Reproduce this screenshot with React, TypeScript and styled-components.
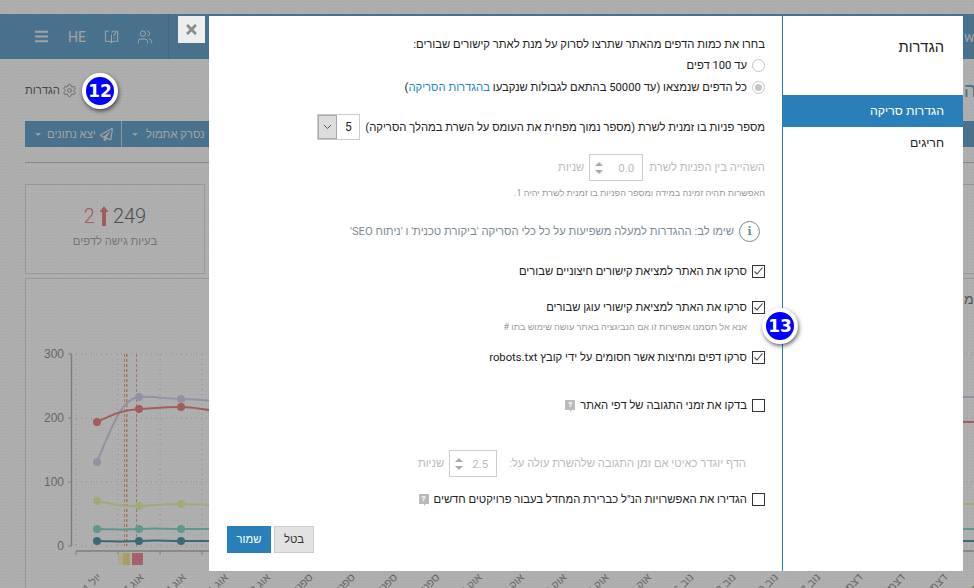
import React from 'react';
import styled, { createGlobalStyle } from 'styled-components';
import { Settings, Users } from 'lucide-react';
import { FaBars, FaRegPaperPlane, FaTimes } from 'react-icons/fa';

const GlobalStyle = createGlobalStyle`
  html, body {
    margin: 0;
    padding: 0;
    overflow: hidden;
  }
  body {
    font-family: Roboto, "Liberation Sans", Arial, sans-serif;
  }
`;

const Page = styled.div`
  position: relative;
  width: 974px;
  height: 588px;
  overflow: hidden;
  padding-top: 14px;
  box-sizing: border-box;
  background-color: #fdfdfd;
  color: #333;
`;

const Overlay = styled.div`
  position: absolute;
  inset: 0;
  background-color: rgba(102, 102, 102, 0.52);
  background-image: radial-gradient(rgba(0, 0, 0, 0.04) 1px, transparent 1px);
  background-size: 3px 3px;
`;

/* page behind the dialog */
const Header = styled.header`
  display: flex;
  align-items: center;
  height: 45px;
  padding-left: 34px;
  background: #2980b9;
  color: #e6e6e6;
  white-space: nowrap;
`;

const HeaderIcons = styled.div`
  display: flex;
  align-items: center;
  width: 134px;
  height: 100%;
  border-right: 1px solid #1f6a9c;
  flex-shrink: 0;
`;

const HeaderLang = styled.span`
  width: 18px;
  margin: 0 18px 0 19px;
  font-size: 14px;
`;

const UsersWrap = styled.span`
  display: flex;
  margin-left: 18px;
`;

const HeaderHost = styled.span`
  margin-left: 795px;
  font-size: 14px;
`;

const BookIcon = () => (
  <svg width="15" height="15" viewBox="0 0 16 16" fill="none" stroke="currentColor" strokeWidth="1.1">
    <path d="M5 2.5H1.5v10.5H6l2 1.5 2-1.5h4.5V2.5H13" />
    <path d="M8 14.5V6" />
    <path d="M8.5 4c0-2.4 4-2.4 4 0 0 1.6-2 1.6-2 3.2M10.5 9v1" />
  </svg>
);

const TitleRow = styled.div`
  display: flex;
  align-items: center;
  height: 62px;
  padding-left: 25px;
  font-size: 11.25px;
  color: #222;
  white-space: nowrap;
`;

const GearWrap = styled.span`
  display: flex;
  flex-shrink: 0;
  margin-left: 2px;
  color: #666;
`;

const PageHeading = styled.span`
  margin-left: 887px;
  font-size: 20px;
  font-weight: 500;
  color: #2980b9;
`;

const Toolbar = styled.div`
  display: flex;
  height: 26px;
  margin-left: 25px;
  background: #2980b9;
  color: #e4e4e4;
  font-size: 11.25px;
  white-space: nowrap;
`;

const ToolbarButton = styled.div<{ $width: number; $gap: number }>`
  display: flex;
  align-items: center;
  gap: ${(p) => p.$gap}px;
  flex-shrink: 0;
  width: ${(p) => p.$width}px;
  padding-left: 10px;
  box-sizing: border-box;
  border-right: 1px solid #d0d0d0;
`;

const PlaneWrap = styled.span`
  display: flex;
  margin-left: -2px;
`;

const Caret = styled.span`
  width: 0;
  height: 0;
  border-left: 3px solid transparent;
  border-right: 3px solid transparent;
  border-top: 3px solid #d8d8d8;
`;

const Divider = styled.hr`
  height: 1px;
  margin: 15px 0 21px 25px;
  border: 0;
  background: #aaa;
`;

const StatsRow = styled.div`
  display: flex;
  gap: 4px;
  margin-left: 25px;
`;

const StatCard = styled.div<{ $width: number }>`
  display: flex;
  flex-direction: column;
  align-items: center;
  flex-shrink: 0;
  width: ${(p) => p.$width}px;
  height: 90px;
  box-sizing: border-box;
  padding-top: 17px;
  border: 1px solid #ccc;
  background: #fff;
`;

const StatValue = styled.div`
  display: flex;
  align-items: center;
  gap: 4px;
  height: 27px;
  font-size: 20px;
  font-weight: 300;
  color: #333;
  direction: ltr;
`;

const StatDelta = styled.span`
  color: #e85050;
`;

const StatLabel = styled.div`
  margin-top: 6px;
  font-size: 11.25px;
  color: #888;
`;

const ChartCard = styled.div`
  height: 320px;
  margin: 4px 0 0 25px;
  border: 1px solid #ccc;
  border-right: 0;
  border-bottom: 0;
  background: #fff;
`;

const POINT_X = [97, 139, 181, 223];
const GRID_Y = [354, 418, 482, 546];
const MONTHS = [
  'יול 31', 'אוג 7', 'אוג 14', 'אוג 21', 'אוג 28', 'ספט 4', 'ספט 11', 'ספט 18', 'ספט 25',
  'אוק 2', 'אוק 9', 'אוק 16', 'אוק 23', 'אוק 30', 'נוב 6', 'נוב 13', 'נוב 20', 'נוב 27',
  'דצמ 4', 'דצמ 11', 'דצמ 18', 'דצמ 25', 'ינו 1',
];

const SERIES = [
  { color: '#c8c0ea', points: [462, 397, 399, 401], end: 397 },
  { color: '#e85555', points: [422, 409, 407, 411], end: 422 },
  { color: '#e2f78c', points: [501, 506, 504, 505], end: 504 },
  { color: '#55d2ba', points: [529, 529, 529, 529], end: 529 },
  { color: '#08708a', points: [541, 541, 541, 541], end: 541 },
];

// svg is offset by the card position so numbers below are page coordinates
const Chart = () => (
  <svg width="949" height="310" viewBox="26 279 949 310" style={{ display: 'block' }}>
    {GRID_Y.map((y) => (
      <line key={y} x1="76" x2="974" y1={y} y2={y} stroke="#bbb" strokeDasharray="1 4" />
    ))}
    {POINT_X.map((x) => (
      <line key={x} x1={x - 21} x2={x - 21} y1="354" y2="546" stroke="#bbb" strokeDasharray="1 4" />
    ))}
    <path d="M71.5 354V546" stroke="#999" strokeWidth="1.5" />
    {GRID_Y.map((y) => (
      <line key={y} x1="68" x2="72" y1={y} y2={y} stroke="#999" />
    ))}
    <path d="M76 551H974" stroke="#999" strokeWidth="1.5" />
    {[76, 118, 160, 202].map((x) => (
      <line key={x} x1={x} x2={x} y1="551" y2="555" stroke="#999" />
    ))}
    {['300', '200', '100', '0'].map((label, i) => (
      <text key={label} x="64" y={GRID_Y[i] + 4} textAnchor="end" fontSize="12" fontFamily="Liberation Sans" fill="#666">
        {label}
      </text>
    ))}
    <rect x="118" y="553" width="5" height="12" fill="#fff3c0" />
    <rect x="123" y="553" width="7" height="12" fill="#f2dc6b" />
    <rect x="132" y="553" width="11" height="12" fill="#ea5f72" />
    <path d="M124.5 354V546M126.5 354V546M136.5 354V546" stroke="#e85555" strokeDasharray="3 2" strokeOpacity="0.75" />
    <path d="M127.5 354V546" stroke="#f2dc6b" strokeDasharray="3 2" />
    {SERIES.map((s) => {
      const [a, b, c, d] = s.points;
      const curve = `M97 ${a}C112 ${a - (a - b) * 0.55} 122 ${b + 1} 139 ${b}S165 ${c} 181 ${c}S207 ${d} 223 ${d}L974 ${s.end}`;
      return (
        <g key={s.color}>
          <path d={curve} fill="none" stroke={s.color} strokeWidth="2" />
          {s.points.map((y, i) => (
            <circle key={i} cx={POINT_X[i]} cy={y} r="4" fill={s.color} />
          ))}
        </g>
      );
    })}
    {MONTHS.map((label, i) => (
      <text
        key={i}
        transform={`translate(${102 + i * 42.3} 578) rotate(-45)`}
        direction="rtl"
        textAnchor="start"
        fontSize="11"
        fontFamily="Liberation Sans"
        fill="#666"
      >
        {label}
      </text>
    ))}
    <text x="964" y="304" fontSize="14" fontFamily="Liberation Sans" fill="#444">גמ</text>
  </svg>
);

const StatArrow = () => (
  <svg width="10" height="20" viewBox="0 0 10 20">
    <path d="M5 0l4.5 6H7v14H3V6H.5z" fill="#e85050" />
  </svg>
);

/* dialog */
const Modal = styled.div`
  position: absolute;
  left: 209px;
  top: 16px;
  display: flex;
  width: 754px;
  height: 555px;
  background: #fff;
  direction: rtl;
`;

const CloseButton = styled.div`
  position: absolute;
  left: 178px;
  top: 16px;
  display: flex;
  align-items: center;
  justify-content: center;
  width: 27px;
  height: 27px;
  background: #eee;
  color: #8c8c8c;
  font-size: 15px;
`;

const SideBar = styled.aside`
  flex-shrink: 0;
  width: 180px;
  border-left: 1px solid #2980b9;
`;

const SideTitle = styled.h2`
  height: 79px;
  margin: 0;
  padding: 22px 19px 0 0;
  box-sizing: border-box;
  font-size: 14.7px;
  line-height: 19px;
  font-weight: 400;
  color: #222;
`;

const SideItem = styled.div<{ $active?: boolean }>`
  height: 32px;
  padding-right: 19px;
  font-size: 12.3px;
  line-height: 32px;
  color: ${(p) => (p.$active ? '#fff' : '#222')};
  background: ${(p) => (p.$active ? '#2980b9' : 'transparent')};
`;

const Body = styled.div`
  flex: 1;
  padding: 18px 17px 0 0;
`;

const Field = styled.div<{ $mt: number; $h?: number; $indent?: number; $muted?: boolean }>`
  display: flex;
  align-items: center;
  gap: 5px;
  height: ${(p) => p.$h ?? 20}px;
  margin-top: ${(p) => p.$mt}px;
  margin-right: ${(p) => p.$indent ?? 0}px;
  font-size: 11.25px;
  white-space: nowrap;
  color: ${(p) => (p.$muted ? '#bbb' : '#222')};
`;

const Hint = styled(Field)`
  font-size: 9.15px;
  color: #999;
`;

const Link = styled.span`
  color: #1b87c9;
`;

const Radio = styled.span<{ $checked?: boolean }>`
  display: flex;
  align-items: center;
  justify-content: center;
  width: 13px;
  height: 13px;
  box-sizing: border-box;
  border: 1px solid #c4c4c4;
  border-radius: 50%;
  &::after {
    content: '';
    width: 7px;
    height: 7px;
    border-radius: 50%;
    background: ${(p) => (p.$checked ? '#c4c4c4' : 'transparent')};
  }
`;

const CheckBox = styled.span`
  display: flex;
  flex-shrink: 0;
  width: 11px;
  height: 11px;
  border: 1px solid #333;
  color: #444;
`;

const Check = ({ on }: { on?: boolean }) => (
  <CheckBox>
    {on && (
      <svg width="11" height="11" viewBox="0 0 11 11" fill="none" stroke="currentColor" strokeWidth="1.1">
        <path d="M1.5 5.5l2.5 2.5 5.5-6.5" />
      </svg>
    )}
  </CheckBox>
);

const SelectBox = styled.div`
  display: flex;
  width: 43px;
  height: 26px;
  box-sizing: border-box;
  border: 1px solid #ccc;
`;

const SelectValue = styled.span`
  flex: 1;
  text-align: center;
  line-height: 24px;
  font-size: 12px;
`;

const SelectArrow = styled.span`
  display: flex;
  align-items: center;
  justify-content: center;
  width: 17px;
  background: #ddd;
  border: 1px solid #aaa;
`;

const NumberBox = styled.div<{ $width: number; $offset?: number }>`
  display: flex;
  align-items: center;
  justify-content: space-between;
  width: ${(p) => p.$width}px;
  height: 27px;
  margin-right: ${(p) => p.$offset ?? 0}px;
  box-sizing: border-box;
  padding: 0 8px 0 5px;
  border: 1px solid #ccc;
  font-size: 11.5px;
  color: #bbb;
`;

const Spinner = styled.span`
  display: flex;
  flex-direction: column;
  gap: 4px;
  &::before,
  &::after {
    content: '';
    width: 0;
    height: 0;
    border-left: 4px solid transparent;
    border-right: 4px solid transparent;
  }
  &::before {
    border-bottom: 4px solid #aaa;
  }
  &::after {
    border-top: 4px solid #aaa;
  }
`;

const InfoCircle = styled.span`
  display: flex;
  align-items: center;
  justify-content: center;
  width: 19px;
  height: 19px;
  margin-right: 5px;
  border: 1px solid #6f8a99;
  border-radius: 50%;
  font-family: "DejaVu Serif", serif;
  font-size: 11px;
  font-weight: 700;
  color: #6f8a99;
`;

const InfoText = styled.span`
  color: #7d8a92;
`;

const HelpMark = styled.span`
  position: relative;
  display: inline-block;
  width: 10px;
  height: 10px;
  background: #bbb;
  color: #fff;
  font-size: 8px;
  font-weight: 700;
  line-height: 10px;
  text-align: center;
  &::after {
    content: '';
    position: absolute;
    left: 5px;
    bottom: -2px;
    border-top: 2px solid #bbb;
    border-right: 2px solid transparent;
  }
`;

const Footer = styled.div`
  display: flex;
  gap: 3px;
  height: 27px;
  margin-top: 17px;
  padding-left: 18px;
  direction: ltr;
`;

const Button = styled.button<{ $primary?: boolean }>`
  height: 27px;
  width: ${(p) => (p.$primary ? 44 : 40)}px;
  padding: 0;
  border: 1px solid ${(p) => (p.$primary ? '#2980b9' : '#ccc')};
  background: ${(p) => (p.$primary ? '#2980b9' : '#e2e2e2')};
  color: ${(p) => (p.$primary ? '#fff' : '#333')};
  font-family: inherit;
  font-size: 11.25px;
`;

const Badge = styled.div<{ $x: number; $y: number }>`
  position: absolute;
  left: ${(p) => p.$x - 18}px;
  top: ${(p) => p.$y - 18}px;
  display: flex;
  align-items: center;
  justify-content: center;
  width: 36px;
  height: 36px;
  box-sizing: border-box;
  border: 4px solid #fff;
  border-radius: 50%;
  background: #0000ff;
  box-shadow: 1px 2px 4px rgba(0, 0, 0, 0.6);
  color: #fff;
  font-family: "DejaVu Sans", sans-serif;
  font-size: 17px;
  font-weight: 700;
`;

function App(): JSX.Element {
  return (
    <Page>
      <GlobalStyle />
      <Header>
        <HeaderIcons>
          <FaBars size={15} />
          <HeaderLang>HE</HeaderLang>
          <BookIcon />
          <UsersWrap>
            <Users size={16} strokeWidth={1.5} />
          </UsersWrap>
        </HeaderIcons>
        <HeaderHost>www.</HeaderHost>
      </Header>
      <TitleRow>
        הגדרות
        <GearWrap>
          <Settings size={15} strokeWidth={1.5} />
        </GearWrap>
        <PageHeading>ה</PageHeading>
      </TitleRow>
      <Toolbar>
        <ToolbarButton $width={97} $gap={6}>
          <Caret />
          <span>יצא נתונים</span>
          <PlaneWrap>
            <FaRegPaperPlane size={13} />
          </PlaneWrap>
        </ToolbarButton>
        <ToolbarButton $width={90} $gap={8}>
          <Caret />
          <span>נסרק אתמול</span>
        </ToolbarButton>
      </Toolbar>
      <Divider />
      <StatsRow>
        <StatCard $width={180}>
          <StatValue>
            <StatDelta>2</StatDelta>
            <StatArrow />
            <span>249</span>
          </StatValue>
          <StatLabel>בעיות גישה לדפים</StatLabel>
        </StatCard>
        <StatCard $width={800} />
      </StatsRow>
      <ChartCard>
        <Chart />
      </ChartCard>

      <Overlay />
      <CloseButton>
        <FaTimes />
      </CloseButton>
      <Modal>
        <SideBar>
          <SideTitle>הגדרות</SideTitle>
          <SideItem $active>הגדרות סריקה</SideItem>
          <SideItem>חריגים</SideItem>
        </SideBar>
        <Body>
          <Field $mt={0}>בחרו את כמות הדפים מהאתר שתרצו לסרוק על מנת לאתר קישורים שבורים:</Field>
          <Field $mt={1}>
            <Radio />
            עד 100 דפים
          </Field>
          <Field $mt={2}>
            <Radio $checked />
            <span>
              כל הדפים שנמצאו (עד 50000 בהתאם לגבולות שנקבעו <Link>בהגדרות הסריקה</Link>)
            </span>
          </Field>
          <Field $mt={17} $h={26}>
            מספר פניות בו זמנית לשרת (מספר נמוך מפחית את העומס על השרת במהלך הסריקה)
            <SelectBox>
              <SelectValue>5</SelectValue>
              <SelectArrow>
                <svg width="9" height="6" viewBox="0 0 9 6" fill="none" stroke="#555" strokeWidth="1">
                  <path d="M1 1l3.5 3.5L8 1" />
                </svg>
              </SelectArrow>
            </SelectBox>
          </Field>
          <Field $mt={14} $h={27} $muted>
            השהייה בין הפניות לשרת
            <NumberBox $width={54} $offset={1}>
              <span>0.0</span>
              <Spinner />
            </NumberBox>
            שניות
          </Field>
          <Hint $mt={5} $h={14}>האפשרות תהיה זמינה במידה ומספר הפניות בו זמנית לשרת יהיה 1.</Hint>
          <Field $mt={21} $h={21}>
            <InfoCircle>i</InfoCircle>
            <InfoText>שימו לב: ההגדרות למעלה משפיעות על כל כלי הסריקה 'ביקורת טכנית' ו 'ניתוח SEO'</InfoText>
          </Field>
          <Field $mt={19}>
            <Check on />
            סרקו את האתר למציאת קישורים חיצוניים שבורים
          </Field>
          <Field $mt={16}>
            <Check on />
            סרקו את האתר למציאת קישורי עוגן שבורים
          </Field>
          <Hint $mt={3} $h={14} $indent={18}>אנא אל תסמנו אפשרות זו אם הנביגציה באתר עושה שימוש בתו #</Hint>
          <Field $mt={13}>
            <Check on />
            <span>סרקו דפים ומחיצות אשר חסומים על ידי קובץ robots.txt</span>
          </Field>
          <Field $mt={28}>
            <Check />
            בדקו את זמני התגובה של דפי האתר
            <HelpMark>?</HelpMark>
          </Field>
          <Field $mt={35} $h={27} $indent={19} $muted>
            הדף יוגדר כאיטי אם זמן התגובה שלהשרת עולה על:
            <NumberBox $width={48} $offset={7}>
              <span>2.5</span>
              <Spinner />
            </NumberBox>
            שניות
          </Field>
          <Field $mt={12}>
            <Check />
            הגדירו את האפשרויות הנ"ל כברירת המחדל בעבור פרויקטים חדשים
            <HelpMark>?</HelpMark>
          </Field>
          <Footer>
            <Button $primary>שמור</Button>
            <Button>בטל</Button>
          </Footer>
        </Body>
      </Modal>
      <Badge $x={100} $y={91}>12</Badge>
      <Badge $x={780} $y={326}>13</Badge>
    </Page>
  );
}

export default App;
